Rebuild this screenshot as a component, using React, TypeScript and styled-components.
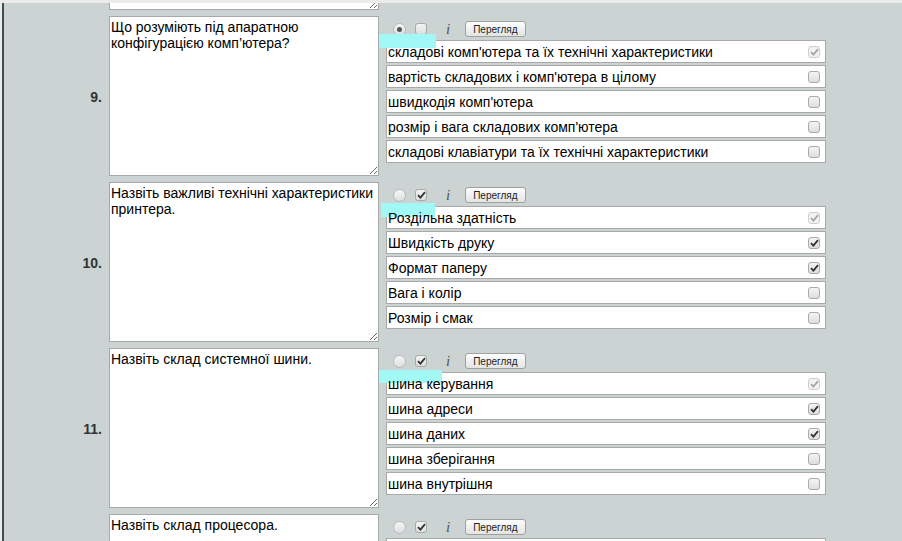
import React from 'react';
import styled, { createGlobalStyle } from 'styled-components';

const GlobalStyle = createGlobalStyle`
  html, body {
    margin: 0;
    padding: 0;
    height: 100%;
    overflow: hidden;
    background: #ebebeb;
    font-family: "Liberation Sans", Arial, sans-serif;
  }
`;

const Page = styled.div`
  margin: 3px 0 0 2px;
  height: 538px;
  border-left: 2px solid #434d4b;
  background: #cbd4d2;
  overflow: hidden;
`;

const List = styled.div`
  margin-top: -153px;
  display: flex;
  flex-direction: column;
`;

const Block = styled.div`
  display: grid;
  grid-template-columns: 105px 270px 447px;
  height: 166px;
`;

const Num = styled.div`
  height: 160px;
  display: flex;
  align-items: center;
  justify-content: flex-end;
  padding-right: 7px;
  padding-top: 2px;
  box-sizing: border-box;
  font-size: 14px;
  font-weight: bold;
  color: #333;
`;

const Question = styled.textarea`
  box-sizing: border-box;
  width: 270px;
  height: 160px;
  margin: 0;
  padding: 2px 1px;
  border: 1px solid #a9a9a9;
  background: #fff;
  font-family: "Liberation Sans", Arial, sans-serif;
  font-size: 14px;
  line-height: 16px;
  color: #000;
  outline: none;
`;

const Answers = styled.div`
  position: relative;
  padding: 5px 0 0 7px;
`;

const Toolbar = styled.div`
  display: flex;
  align-items: center;
  height: 16px;
  padding-left: 7px;
  margin-bottom: 3px;
`;

const Radio = styled.span<{ $on?: boolean }>`
  box-sizing: border-box;
  width: 13px;
  height: 13px;
  border-radius: 50%;
  border: 1px solid #b9b9b9;
  background: linear-gradient(#f6f6f6, #dedede);
  display: flex;
  align-items: center;
  justify-content: center;
  &::after {
    content: '';
    width: 5px;
    height: 5px;
    border-radius: 50%;
    background: ${p => (p.$on ? '#555' : 'transparent')};
  }
`;

const Box = styled.span<{ $faded?: boolean }>`
  box-sizing: border-box;
  width: 12px;
  height: 12px;
  border-radius: 3px;
  border: 1px solid ${p => (p.$faded ? '#cfcfcf' : '#a9a9a9')};
  background: ${p => (p.$faded ? '#f2f2f2' : 'linear-gradient(#f4f4f4, #dedede)')};
  display: flex;
  align-items: center;
  justify-content: center;
  flex-shrink: 0;
`;

const ToolBox = styled(Box)`
  margin-left: 9px;
`;

const Info = styled.span`
  margin-left: 19px;
  font-family: "Liberation Serif", "Times New Roman", serif;
  font-style: italic;
  font-size: 15px;
  color: #555;
  line-height: 16px;
`;

const ViewButton = styled.button`
  margin-left: 15px;
  height: 16px;
  padding: 0 7px;
  border: 1px solid #a0a0a0;
  border-radius: 3px;
  background: linear-gradient(#fdfdfd, #e4e4e4);
  font-family: "Liberation Sans", Arial, sans-serif;
  font-size: 10px;
  line-height: 13px;
  color: #222;
`;

const Rows = styled.div`
  display: flex;
  flex-direction: column;
  gap: 2px;
  width: 440px;
`;

const Row = styled.div`
  box-sizing: border-box;
  height: 23px;
  display: flex;
  align-items: center;
  justify-content: space-between;
  padding: 0 5px 0 1px;
  border: 1px solid #a9a9a9;
  background: #fff;
`;

const RowText = styled.span`
  position: relative;
  z-index: 2;
  font-size: 14px;
  color: #000;
`;

const Mark = styled.div`
  position: absolute;
  z-index: 1;
  background: #a2f8f4;
`;

type Tick = 'none' | 'on' | 'faded';

const Tickmark = ({ color }: { color: string }) => (
  <svg width="9" height="8" viewBox="0 0 9 8">
    <path d="M1 4.2 L3.4 6.6 L8 1.2" fill="none" stroke={color} strokeWidth="1.8" />
  </svg>
);

const Check = ({ tick }: { tick: Tick }) => (
  <Box $faded={tick === 'faded'}>
    {tick !== 'none' && <Tickmark color={tick === 'faded' ? '#a6a6a6' : '#333'} />}
  </Box>
);

type Q = {
  n: string;
  text: string;
  radio: boolean;
  box: boolean;
  answers: [string, Tick][];
  tail?: boolean; // only the bottom edge of the field is in view
  head?: boolean; // only the top of the block is in view, number below the fold
  mark?: { left: number; top: number; width: number; height: number };
};

const questions: Q[] = [
  { n: '8.', text: '', radio: false, box: true, answers: [], tail: true },
  {
    n: '9.',
    text: 'Що розуміють під апаратною конфігурацією комп’ютера?',
    radio: true,
    box: false,
    answers: [
      ['складові комп\'ютера та їх технічні характеристики', 'faded'],
      ['вартість складових і комп\'ютера в цілому', 'none'],
      ['швидкодія комп\'ютера', 'none'],
      ['розмір і вага складових комп\'ютера', 'none'],
      ['складові клавіатури та їх технічні характеристики', 'none'],
    ],
    mark: { left: 0, top: 18, width: 57, height: 14 },
  },
  {
    n: '10.',
    text: 'Назвіть важливі технічні характеристики принтера.',
    radio: false,
    box: true,
    answers: [
      ['Роздільна здатність', 'faded'],
      ['Швидкість друку', 'on'],
      ['Формат паперу', 'on'],
      ['Вага і колір', 'none'],
      ['Розмір і смак', 'none'],
    ],
    mark: { left: 2, top: 21, width: 54, height: 14 },
  },
  {
    n: '11.',
    text: 'Назвіть склад системної шини.',
    radio: false,
    box: true,
    answers: [
      ['шина керування', 'faded'],
      ['шина адреси', 'on'],
      ['шина даних', 'on'],
      ['шина зберігання', 'none'],
      ['шина внутрішня', 'none'],
    ],
    mark: { left: 0, top: 22, width: 63, height: 13 },
  },
  {
    n: '12.',
    text: 'Назвіть склад процесора.',
    radio: false,
    box: true,
    answers: [['', 'none']],
    head: true,
  },
];

const App = () => {
  return (
    <>
      <GlobalStyle />
      <Page>
        <List>
          {questions.map(q => (
            <Block key={q.n}>
              <Num>{q.tail || q.head ? null : q.n}</Num>
              <Question readOnly defaultValue={q.text} />
              {q.tail ? (
                <div />
              ) : (
                <Answers>
                  <Toolbar>
                    <Radio $on={q.radio} />
                    <ToolBox>{q.box && <Tickmark color="#333" />}</ToolBox>
                    <Info>i</Info>
                    <ViewButton>Перегляд</ViewButton>
                  </Toolbar>
                  <Rows>
                    {q.answers.map(([t, tick], i) => (
                      <Row key={i}>
                        <RowText>{t}</RowText>
                        <Check tick={tick} />
                      </Row>
                    ))}
                  </Rows>
                  {q.mark && (
                    <Mark
                      style={{ left: q.mark.left, top: q.mark.top, width: q.mark.width, height: q.mark.height }}
                    />
                  )}
                </Answers>
              )}
            </Block>
          ))}
        </List>
      </Page>
    </>
  );
};

export default App;
